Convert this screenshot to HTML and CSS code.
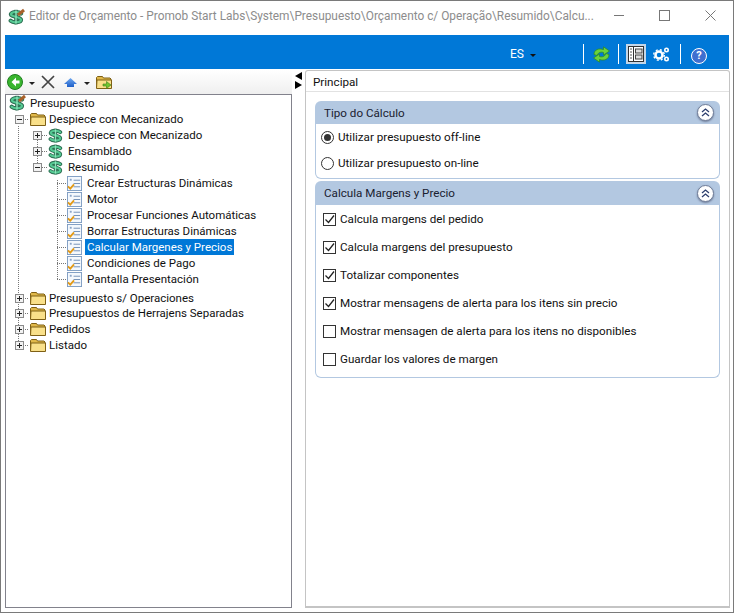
FILE: index.html
```html
<!DOCTYPE html>
<html lang="es">
<head>
<meta charset="utf-8">
<title>Editor de Orçamento</title>
<link rel="stylesheet" href="styles.css">
</head>
<body>
<svg class="defs" width="0" height="0" aria-hidden="true">
  <defs>
    <symbol id="dollar" viewBox="0 0 16 16">
      <path d="M8 .8v14.400" fill="none" stroke="#2c6e52" stroke-width="3.600"/>
      <path d="M13 4.500C11 2.500 4 2.300 3 5S13 7.800 13 10.800 5 14 2.700 11.800" fill="none" stroke="#2c6e52" stroke-width="4.200" stroke-linecap="round"/>
      <path d="M13 4.500C11 2.500 4 2.300 3 5S13 7.800 13 10.800 5 14 2.700 11.800" fill="none" stroke="#55c993" stroke-width="2.200" stroke-linecap="round"/>
      <path d="M8 1.500v13" fill="none" stroke="#8fe3bb" stroke-width="1.400"/>
    </symbol>
    <symbol id="folder" viewBox="0 0 16 16">
      <path d="M.5 13.500V3.500l1-1h5l1 1.500h6.500l1 1v8.500z" fill="#e0b84a" stroke="#7f6015"/>
      <path d="M.5 14.500l.5-8.500h14.500v8.500z" fill="#f9e08a" stroke="#7f6015" stroke-linejoin="round"/>
    </symbol>
    <symbol id="task" viewBox="0 0 16 16">
      <rect x=".5" y=".5" width="15" height="15" fill="#f4f8fd" stroke="#7d9cc2"/>
      <path d="M7 4.500h7M7 8h7M7 11.500h7" stroke="#6f8db5"/>
      <path d="M3 3h2v2H3z" fill="#8aa4c8"/>
      <path d="M1 11l2.500 2.500 4-4.500" fill="none" stroke="#e39a17" stroke-width="2"/>
    </symbol>
    <linearGradient id="up" x1="0" y1="0" x2="0" y2="1">
      <stop offset="0" stop-color="#6fa8f0"/>
      <stop offset="1" stop-color="#1e5fc8"/>
    </linearGradient>
  </defs>
</svg>

<div class="window">
  <header class="titlebar">
    <svg class="app-icon" viewBox="0 0 16 16" width="16" height="16">
      <use href="#dollar"/>
      <path d="M10 6l6-5" stroke="#a8602a" stroke-width="3"/>
    </svg>
    <span class="title">Editor de Orçamento - Promob Start Labs\System\Presupuesto\Orçamento c/ Operação\Resumido\Calcu...</span>
    <div class="winctl">
      <svg width="10" height="10" viewBox="0 0 10 10"><path d="M0 5.500h10" stroke="#777"/></svg>
      <svg width="11" height="11" viewBox="0 0 11 11"><rect x=".5" y=".5" width="10" height="10" fill="none" stroke="#777"/></svg>
      <svg width="11" height="11" viewBox="0 0 11 11"><path d="M.5.500l10 10M10.500.500l-10 10" stroke="#777"/></svg>
    </div>
  </header>

  <div class="bluebar">
    <span class="lang">ES</span>
    <span class="caret-w"></span>
    <span class="sep s1"></span>
    <svg class="bicon" width="17" height="17" viewBox="0 0 17 17">
      <path d="M1 8.500C1 3.500 6 2 10.500 3.500V.8L16.500 5 10.500 9V6.500C7 5.500 5 7 4 9.500z" fill="#6bd23c" stroke="#2b8a2b" stroke-width=".8"/>
      <path d="M16 8.500C16 13.500 11 15 6.500 13.500v2.700L.5 12 6.500 8v2.500c3.500 1 5.500-.5 6.500-3z" fill="#6bd23c" stroke="#2b8a2b" stroke-width=".8"/>
    </svg>
    <span class="sep s2"></span>
    <span class="active-btn">
      <svg width="16" height="16" viewBox="0 0 16 16">
        <rect x=".5" y=".5" width="15" height="15" fill="#fff" stroke="#333"/>
        <path d="M5.500 1v14" stroke="#333"/>
        <path d="M2 3h2M2 6h2M2 9h2M2 12h2" stroke="#555"/>
        <rect x="7.500" y="3" width="6.500" height="4" fill="#ddd" stroke="#444"/>
        <rect x="7.500" y="9" width="6.500" height="4" fill="#ddd" stroke="#444"/>
      </svg>
    </span>
    <svg class="bicon gears" width="17" height="17" viewBox="0 0 17 17">
      <circle cx="6" cy="9" r="3.500" fill="none" stroke="#fff" stroke-width="2.500"/>
      <circle cx="6" cy="9" r="5.300" fill="none" stroke="#fff" stroke-width="1.400" stroke-dasharray="2 2.200"/>
      <circle cx="13.500" cy="4" r="1.700" fill="none" stroke="#fff" stroke-width="1.600"/>
      <circle cx="13.500" cy="13" r="1.700" fill="none" stroke="#fff" stroke-width="1.600"/>
    </svg>
    <span class="sep s3"></span>
    <span class="help">?</span>
  </div>

  <div class="main">
    <aside class="left">
      <div class="toolbar">
        <svg width="16" height="16" viewBox="0 0 16 16">
          <circle cx="8" cy="8" r="7.500" fill="#39b52e" stroke="#1f7f1f"/>
          <path d="M9 3.500L4.500 8 9 12.500V9.500h3.500v-3H9z" fill="#fff"/>
        </svg>
        <span class="caret c1"></span>
        <svg class="tb-x" width="14" height="14" viewBox="0 0 14 14"><path d="M1 1l12 12M13 1L1 13" stroke="#444" stroke-width="1.700"/></svg>
        <svg class="tb-up" width="13" height="9" viewBox="0 0 13 9"><path d="M6.500 0L13 6H10V9H3V6H0z" fill="url(#up)"/></svg>
        <span class="caret c2"></span>
        <svg class="tb-go" width="16" height="16" viewBox="0 0 16 16">
          <use href="#folder"/>
          <path d="M7 10h3.500V7.500L15 11l-4.500 3.500V12H7z" fill="#71c62f" stroke="#3d7d1c" stroke-width=".6"/>
        </svg>
      </div>
      <div class="tree">
        <svg class="connectors" width="240" height="260" aria-hidden="true">
          <path d="M18.500 32V251M37.500 46V72M57.500 86V185M23 25.500h6M42 41.500h6M42 57.500h6M42 73.500h6M57 89.500h10M57 105.500h10M57 121.500h10M57 137.500h10M57 153.500h10M57 169.500h10M57 185.500h10M23 204.500h6M23 219.500h6M23 235.500h6M23 251.500h6" fill="none" stroke="#777" stroke-dasharray="1 1"/>
        </svg>
        <div class="row root"><svg class="ic" width="16" height="16" viewBox="0 0 16 16"><use href="#dollar"/><path d="M10 6l6-5" stroke="#a8602a" stroke-width="3"/></svg><span class="lbl">Presupuesto</span></div>
        <div class="row l1"><i class="exp minus"></i><svg class="ic" width="16" height="16"><use href="#folder"/></svg><span class="lbl">Despiece con Mecanizado</span></div>
        <div class="row l2"><i class="exp plus"></i><svg class="ic" width="15" height="15"><use href="#dollar"/></svg><span class="lbl">Despiece con Mecanizado</span></div>
        <div class="row l2"><i class="exp plus"></i><svg class="ic" width="15" height="15"><use href="#dollar"/></svg><span class="lbl">Ensamblado</span></div>
        <div class="row l2"><i class="exp minus"></i><svg class="ic" width="15" height="15"><use href="#dollar"/></svg><span class="lbl">Resumido</span></div>
        <div class="row l3"><svg class="ic" width="15" height="15"><use href="#task"/></svg><span class="lbl">Crear Estructuras Dinámicas</span></div>
        <div class="row l3"><svg class="ic" width="15" height="15"><use href="#task"/></svg><span class="lbl">Motor</span></div>
        <div class="row l3"><svg class="ic" width="15" height="15"><use href="#task"/></svg><span class="lbl">Procesar Funciones Automáticas</span></div>
        <div class="row l3"><svg class="ic" width="15" height="15"><use href="#task"/></svg><span class="lbl">Borrar Estructuras Dinámicas</span></div>
        <div class="row l3"><svg class="ic" width="15" height="15"><use href="#task"/></svg><span class="lbl selected">Calcular Margenes y Precios</span></div>
        <div class="row l3"><svg class="ic" width="15" height="15"><use href="#task"/></svg><span class="lbl">Condiciones de Pago</span></div>
        <div class="row l3"><svg class="ic" width="15" height="15"><use href="#task"/></svg><span class="lbl">Pantalla Presentación</span></div>
        <div class="row l1 jump"><i class="exp plus"></i><svg class="ic" width="16" height="16"><use href="#folder"/></svg><span class="lbl">Presupuesto s/ Operaciones</span></div>
        <div class="row l1 tight"><i class="exp plus"></i><svg class="ic" width="16" height="16"><use href="#folder"/></svg><span class="lbl">Presupuestos de Herrajens Separadas</span></div>
        <div class="row l1"><i class="exp plus"></i><svg class="ic" width="16" height="16"><use href="#folder"/></svg><span class="lbl">Pedidos</span></div>
        <div class="row l1"><i class="exp plus"></i><svg class="ic" width="16" height="16"><use href="#folder"/></svg><span class="lbl">Listado</span></div>
      </div>
    </aside>

    <div class="splitter">
      <span class="tri left-tri"></span>
      <span class="tri right-tri"></span>
    </div>

    <section class="right">
      <div class="tab">Principal</div>
      <div class="groups">
        <div class="group g1">
          <div class="ghead"><span>Tipo do Cálculo</span><span class="collapse"><svg width="9" height="9" viewBox="0 0 9 9"><path d="M1 4l3.500-3L8 4M1 8l3.500-3L8 8" fill="none" stroke="#2d3f6e" stroke-width="1.300"/></svg></span></div>
          <div class="gbody radios">
            <label class="opt"><span class="radio on"></span>Utilizar presupuesto off-line</label>
            <label class="opt"><span class="radio"></span>Utilizar presupuesto on-line</label>
          </div>
        </div>
        <div class="group g2">
          <div class="ghead tall"><span>Calcula Margens y Precio</span><span class="collapse"><svg width="9" height="9" viewBox="0 0 9 9"><path d="M1 4l3.500-3L8 4M1 8l3.500-3L8 8" fill="none" stroke="#2d3f6e" stroke-width="1.300"/></svg></span></div>
          <div class="gbody checks">
            <label class="opt"><span class="check"><svg width="11" height="11" viewBox="0 0 11 11"><path d="M1.500 5.500l3 3 5.500-7" fill="none" stroke="#222" stroke-width="1.300"/></svg></span>Calcula margens del pedido</label>
            <label class="opt"><span class="check"><svg width="11" height="11" viewBox="0 0 11 11"><path d="M1.500 5.500l3 3 5.500-7" fill="none" stroke="#222" stroke-width="1.300"/></svg></span>Calcula margens del presupuesto</label>
            <label class="opt"><span class="check"><svg width="11" height="11" viewBox="0 0 11 11"><path d="M1.500 5.500l3 3 5.500-7" fill="none" stroke="#222" stroke-width="1.300"/></svg></span>Totalizar componentes</label>
            <label class="opt"><span class="check"><svg width="11" height="11" viewBox="0 0 11 11"><path d="M1.500 5.500l3 3 5.500-7" fill="none" stroke="#222" stroke-width="1.300"/></svg></span>Mostrar mensagens de alerta para los itens sin precio</label>
            <label class="opt"><span class="check"></span>Mostrar mensagen de alerta para los itens no disponibles</label>
            <label class="opt"><span class="check"></span>Guardar los valores de margen</label>
          </div>
        </div>
      </div>
    </section>
  </div>
</div>
</body>
</html>
```

FILE: styles.css
```css
* { box-sizing: border-box; }
html, body { margin: 0; padding: 0; height: 100%; overflow: hidden; }
body { font-family: Roboto, "Open Sans", sans-serif; font-size: 11.65px; color: #111; background: #fff; }
.defs { position: absolute; }
svg { display: block; flex: none; overflow: visible; }

.window {
  width: 734px; height: 613px;
  border: 1px solid #7a7a7a;
  background: #fff;
  display: flex; flex-direction: column;
}

.titlebar { height: 34px; display: flex; align-items: center; padding-left: 7px; flex: none; }
.app-icon { margin-top: -3px; }
.title { margin-left: 5px; margin-top: -5px; font-size: 11.87px; color: #8c8c8c; white-space: nowrap; width: 573px; }
.winctl { margin-left: 12px; display: flex; gap: 35px; margin-top: -5px; }

.bluebar {
  height: 34px; margin: 0 4px; padding-top: 4px; background: #0078d7; flex: none;
  display: flex; align-items: center; color: #fff;
}
.lang { margin-left: 505px; font-size: 12px; }
.caret-w { margin-left: 6px; margin-top: 2px; border: 3px solid transparent; border-top: 3px solid #111; border-bottom: 0; }
.sep { width: 1px; height: 20px; background: #fff; }
.s1 { margin-left: 47px; }
.bicon { margin-left: 9px; }
.s2 { margin-left: 8px; }
.active-btn { margin-left: 7px; width: 20px; height: 20px; background: #c4d6e8; display: flex; align-items: center; justify-content: center; }
.gears { margin-left: 7px; }
.s3 { margin-left: 10px; }
.help {
  margin-left: 10px; margin-top: 3px; width: 16px; height: 16px; border-radius: 50%;
  background: #3f6fd0; border: 1.500px solid #fff; color: #fff;
  font-weight: 700; font-size: 11px; line-height: 13px; text-align: center;
}

.main { flex: 1; display: flex; margin: 1px 4px 4px; min-height: 0; }

.left { width: 287px; display: flex; flex-direction: column; flex: none; }
.toolbar {
  height: 24px; flex: none; display: flex; align-items: center; padding-left: 2px;
  background: linear-gradient(#ffffff, #efefef);
}
.caret { border: 3px solid transparent; border-top: 3px solid #222; border-bottom: 0; margin-top: 2px; }
.c1 { margin-left: 6px; }
.tb-x { margin-left: 6px; }
.tb-up { margin-left: 9px; }
.c2 { margin-left: 7px; }
.tb-go { margin-left: 6px; }

.tree {
  position: relative; flex: 1;
  border: 1px solid #82828c;
  font-size: 11.5px;
}
.connectors { position: absolute; left: -6px; top: -1px; pointer-events: none; }
.row { position: relative; height: 16px; display: flex; align-items: center; white-space: nowrap; }
.root { padding-left: 3px; }
.root .ic { margin-right: 3px; }
.l1 { padding-left: 9px; }
.l1 .ic { margin-left: 6px; margin-right: 1px; }
.l2 { padding-left: 27px; }
.l2 .ic { margin-left: 6px; margin-right: 3px; }
.l3 { padding-left: 61px; }
.l3 .ic { margin-right: 3px; }
.jump { margin-top: 3px; }
.tight { margin-top: -1px; }
.lbl { padding: 0 2px; line-height: 16px; }
.selected { background: #0078d7; color: #fff; }

.exp {
  position: relative; width: 9px; height: 9px; flex: none; background: #f2f2f2; border: 1px solid #8a8a8a;
}
.exp::before { content: ""; position: absolute; left: 1px; top: 3px; width: 5px; height: 1px; background: #222; }
.plus::after { content: ""; position: absolute; left: 3px; top: 1px; width: 1px; height: 5px; background: #222; }

.splitter { width: 13px; flex: none; display: flex; flex-direction: column; align-items: center; padding-top: 2px; gap: 1px; }
.tri { border-top: 4px solid transparent; border-bottom: 4px solid transparent; }
.left-tri { border-right: 7px solid #000; }
.right-tri { border-left: 7px solid #000; }

.right { flex: 1; border: 1px solid #c4c4c4; border-bottom-width: 2px; border-radius: 3px 3px 0 0; display: flex; flex-direction: column; }
.tab { height: 21px; padding: 3px 0 0 7px; border-bottom: 1px solid #e2e2e2; line-height: 16px; flex: none; }
.groups { padding: 9px 9px 0 9px; display: flex; flex-direction: column; gap: 2px; }
.group { width: 405px; }
.ghead {
  height: 23px; background: #b3c8e1; border-radius: 6px 6px 0 0;
  display: flex; align-items: center; justify-content: space-between;
  padding: 0 6px 0 9px; color: #1a2030;
}
.ghead.tall { height: 24px; }
.collapse {
  width: 17px; height: 17px; border-radius: 50%; background: #fff; border: 1px solid #6f7d99;
  box-shadow: 0 1px 2px #6f7d99;
  display: flex; align-items: center; justify-content: center;
}
.gbody { border: 1px solid #b3c8e1; border-top: 0; border-radius: 0 0 6px 6px; }
.opt { display: flex; align-items: center; height: 28px; white-space: nowrap; }
.radios { height: 55px; padding: 0 0 0 5px; display: flex; flex-direction: column; }
.radios .opt { height: 26px; }
.radio {
  position: relative; width: 13px; height: 13px; border: 1px solid #333; border-radius: 50%; margin-right: 4px; flex: none;
}
.radio.on::after { content: ""; position: absolute; left: 2px; top: 2px; width: 7px; height: 7px; background: #333; border-radius: 50%; }
.checks { padding: 0 0 4px 7px; }
.check {
  width: 13px; height: 13px; border: 1px solid #333; margin-right: 4px; flex: none;
  display: flex; align-items: center; justify-content: center;
}
```
